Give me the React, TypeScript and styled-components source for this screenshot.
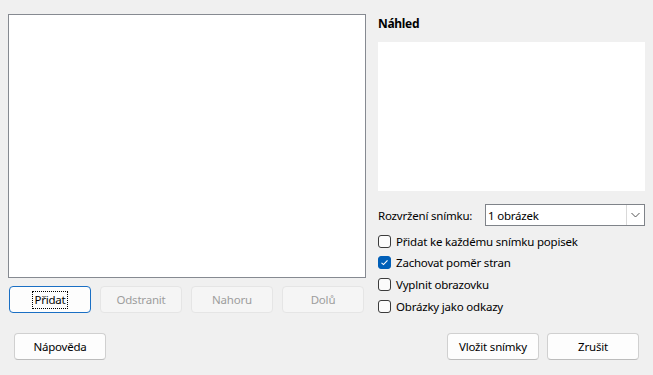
import React, { useState } from 'react';
import styled, { createGlobalStyle, css } from 'styled-components';

const GlobalStyle = createGlobalStyle`
  html, body {
    margin: 0;
    padding: 0;
    background: #f0f0f0;
  }
  body {
    font-family: 'Noto Sans', 'Open Sans', sans-serif;
    font-size: 11.5px;
    letter-spacing: -0.2px;
    color: #000;
  }
`;

const Dialog = styled.div`
  width: 653px;
  height: 375px;
  box-sizing: border-box;
  display: flex;
  flex-direction: column;
  background: #f0f0f0;
`;

const Body = styled.div`
  display: flex;
  gap: 12px;
  padding: 14px 8px 0 8px;
`;

const LeftColumn = styled.div`
  width: 358px;
  display: flex;
  flex-direction: column;
  gap: 8px;
`;

const ListBox = styled.div`
  height: 264px;
  box-sizing: border-box;
  background: #fff;
  border: 1px solid #868a91;
`;

const ButtonRow = styled.div`
  display: grid;
  grid-template-columns: repeat(4, 82px);
  gap: 9px;
  padding-left: 1px;
`;

const Button = styled.button<{ $primary?: boolean; $width?: number }>`
  height: 27px;
  width: ${({ $width }) => ($width ? `${$width}px` : '100%')};
  box-sizing: border-box;
  font-family: inherit;
  font-size: inherit;
  letter-spacing: inherit;
  color: #000;
  background: #fdfdfd;
  border: 1px solid #d0d0d0;
  border-bottom-color: #bcbcbc;
  border-radius: 4px;
  padding: 0;
  display: flex;
  align-items: center;
  justify-content: center;

  &:disabled {
    color: #9d9d9d;
    background: #f5f5f5;
    border-color: #e5e5e5;
  }

  ${({ $primary }) =>
    $primary &&
    css`
      border: 1px solid #1a6fc4;
    `}
`;

const FocusLabel = styled.span`
  outline: 1px dotted #000;
  outline-offset: 0;
  padding: 0 1px;
  line-height: 16px;
`;

const RightColumn = styled.div`
  width: 267px;
  display: flex;
  flex-direction: column;
`;

const Heading = styled.div`
  font-weight: 700;
  font-size: 12px;
  line-height: 16px;
  margin-top: 2px;
  letter-spacing: -0.3px;
`;

const Preview = styled.div`
  margin-top: 10px;
  height: 149px;
  background: #fff;
`;

const LayoutRow = styled.div`
  margin-top: 13px;
  display: flex;
  align-items: center;
  justify-content: space-between;
`;

const Combo = styled.div`
  width: 160px;
  height: 22px;
  box-sizing: border-box;
  background: #fff;
  border: 1px solid #7f8389;
  display: flex;
  align-items: stretch;
`;

const ComboText = styled.div`
  flex: 1;
  padding-left: 2px;
  display: flex;
  align-items: center;
`;

const ComboArrow = styled.div`
  width: 17px;
  border-left: 1px solid #d9d9d9;
  display: flex;
  align-items: center;
  justify-content: center;
`;

const Options = styled.div`
  margin-top: 7px;
  display: flex;
  flex-direction: column;
  gap: 5.7px;
`;

const CheckRow = styled.label`
  display: flex;
  align-items: center;
  gap: 5px;
  height: 16px;
`;

const Box = styled.span<{ $checked: boolean }>`
  width: 13px;
  height: 13px;
  box-sizing: border-box;
  border-radius: 3px;
  border: 1px solid ${({ $checked }) => ($checked ? '#005fb8' : '#3b3b3b')};
  background: ${({ $checked }) => ($checked ? '#005fb8' : '#fbfbfb')};
  display: flex;
  align-items: center;
  justify-content: center;
`;

const Footer = styled.div`
  margin-top: auto;
  padding: 0 14px 15px 14px;
  display: flex;
  align-items: center;
  gap: 8px;
`;

const Spacer = styled.div`
  flex: 1;
`;

const Checkbox = ({ label, checked }: { label: string; checked: boolean }) => (
  <CheckRow>
    <Box $checked={checked}>
      {checked && (
        <svg width="9" height="9" viewBox="0 0 9 9">
          <path d="M1.5 4.8 L3.5 6.6 L7.5 2.3" fill="none" stroke="#fff" strokeWidth="1.1" />
        </svg>
      )}
    </Box>
    <span>{label}</span>
  </CheckRow>
);

export default function App() {
  const [options] = useState([
    { label: 'Přidat ke každému snímku popisek', checked: false },
    { label: 'Zachovat poměr stran', checked: true },
    { label: 'Vyplnit obrazovku', checked: false },
    { label: 'Obrázky jako odkazy', checked: false },
  ]);

  return (
    <>
      <GlobalStyle />
      <Dialog>
        <Body>
          <LeftColumn>
            <ListBox />
            <ButtonRow>
              <Button $primary>
                <FocusLabel>Přidat</FocusLabel>
              </Button>
              <Button disabled>Odstranit</Button>
              <Button disabled>Nahoru</Button>
              <Button disabled>Dolů</Button>
            </ButtonRow>
          </LeftColumn>
          <RightColumn>
            <Heading>Náhled</Heading>
            <Preview />
            <LayoutRow>
              <span>Rozvržení snímku:</span>
              <Combo>
                <ComboText>1 obrázek</ComboText>
                <ComboArrow>
                  <svg width="9" height="6" viewBox="0 0 9 6">
                    <path d="M0.5 1 L4.5 5 L8.5 1" fill="none" stroke="#555" strokeWidth="1" />
                  </svg>
                </ComboArrow>
              </Combo>
            </LayoutRow>
            <Options>
              {options.map((o) => (
                <Checkbox key={o.label} label={o.label} checked={o.checked} />
              ))}
            </Options>
          </RightColumn>
        </Body>
        <Footer>
          <Button $width={92}>Nápověda</Button>
          <Spacer />
          <Button $width={92}>Vložit snímky</Button>
          <Button $width={92}>Zrušit</Button>
        </Footer>
      </Dialog>
    </>
  );
}
